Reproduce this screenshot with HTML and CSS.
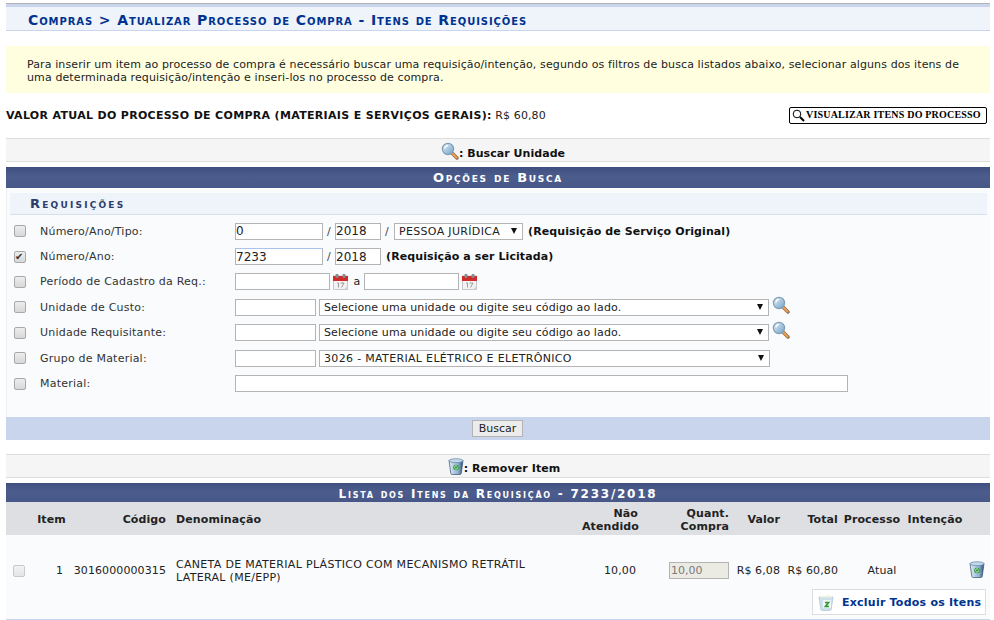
FILE: index.html
```html
<!DOCTYPE html>
<html lang="pt-BR">
<head>
<meta charset="utf-8">
<title>Compras</title>
<link rel="stylesheet" href="styles.css">
</head>
<body>
<svg class="sprites" width="0" height="0" aria-hidden="true">
  <defs>
    <linearGradient id="lens" x1="0" y1="0" x2="1" y2="1"><stop offset="0" stop-color="#e4f1fb"/><stop offset="1" stop-color="#6f9fc6"/></linearGradient>
    <linearGradient id="bin" x1="0" y1="0" x2="1" y2="0"><stop offset="0" stop-color="#e2edf6"/><stop offset=".65" stop-color="#8fb0d0"/><stop offset="1" stop-color="#2f4f70"/></linearGradient>
    <symbol id="i-search" viewBox="0 0 18 18">
      <path d="M10.500 10.500 16 16" stroke="#8a6a4a" stroke-width="3.400" stroke-linecap="round"/>
      <path d="M11 11l4.600 4.600" stroke="#f0a050" stroke-width="2" stroke-linecap="round"/>
      <circle cx="7" cy="7" r="5.600" fill="url(#lens)" stroke="#7f9fb8" stroke-width="1.200"/>
      <path d="M4 6.500A3 3 0 0 1 7 3.600" fill="none" stroke="#fff" stroke-width="1.200"/>
    </symbol>
    <symbol id="i-cal" viewBox="0 0 15 16">
      <rect x=".5" y="2" width="14" height="13.500" fill="#f2f2f2" stroke="#c8c8c8"/>
      <rect x="0" y="2" width="15" height="5" fill="#cf2b2b"/>
      <rect x="2.500" y="0" width="3" height="4" rx="1" fill="#8a8a8a"/>
      <rect x="9.500" y="0" width="3" height="4" rx="1" fill="#8a8a8a"/>
      <path d="M4 9h1.500v4.500M7.500 9H11L8.500 13.500" fill="none" stroke="#9a9a9a"/>
      <path d="M11 15.500l3.500-3.500v3.500z" fill="#d0d0d0"/>
    </symbol>
    <symbol id="i-bin" viewBox="0 0 16 17">
      <path d="M1 2.500h14l-1.800 13a1.500 1.500 0 0 1-1.500 1H4.300a1.500 1.500 0 0 1-1.500-1z" fill="url(#bin)" stroke="#2f4f70" stroke-width=".7"/>
      <ellipse cx="8" cy="2.700" rx="7" ry="2" fill="#c4d8e8" stroke="#5f84a5" stroke-width=".7"/>
      <circle cx="8" cy="9.500" r="2.800" fill="#2f9a3a"/>
      <path d="M6.400 9.500a1.600 1.600 0 0 1 2.900-.9M9.600 9.500a1.600 1.600 0 0 1-2.900.9" fill="none" stroke="#e4f7e4" stroke-width=".9"/>
    </symbol>
    <symbol id="i-binall" viewBox="0 0 16 17">
      <path d="M1 3h14l-1.800 12.500a1.500 1.500 0 0 1-1.500 1H4.300a1.500 1.500 0 0 1-1.500-1z" fill="#cfe0ea" stroke="#a9c3d2" stroke-width=".7"/>
      <path d="M2 3.500l2-2.500 3 1.500 3-2 3 1 1 2z" fill="#f3f6e6"/>
      <rect x="5" y="6" width="8" height="8" rx="1" fill="#fff" opacity=".7"/>
      <path d="M7 8.500h3.500L7.500 12.500H11" fill="none" stroke="#2f9a2f" stroke-width="1.700"/>
    </symbol>
  </defs>
</svg>

<div class="page">
  <h2 class="title">Compras &gt; Atualizar Processo de Compra - Itens de Requisições</h2>

  <div class="notice">Para inserir um item ao processo de compra é necessário buscar uma requisição/intenção, segundo os filtros de busca listados abaixo, selecionar alguns dos itens de uma determinada requisição/intenção e inseri-los no processo de compra.</div>

  <div class="value-row">
    <p class="value-text"><b>VALOR ATUAL DO PROCESSO DE COMPRA (MATERIAIS E SERVIÇOS GERAIS):</b> R$ 60,80</p>
    <button class="view-btn" type="button">
      <svg class="view-icon" viewBox="0 0 13 13"><circle cx="5" cy="5" r="3.800" fill="#fff" stroke="#000"/><path d="M8 8l4 4" stroke="#000" stroke-width="2"/></svg>
      <span>VISUALIZAR ITENS DO PROCESSO</span>
    </button>
  </div>

  <div class="legend legend-search"><svg class="ic18"><use href="#i-search"/></svg><b>: Buscar Unidade</b></div>

  <section class="panel">
    <h3 class="panel-head">Opções de Busca</h3>
    <div class="panel-body">
      <h4 class="sub-head">Requisições</h4>
      <div class="form-grid">
        <div class="row">
          <input class="chk" type="checkbox">
          <label class="lbl">Número/Ano/Tipo:</label>
          <div class="fields">
            <input class="in w88" value="0"><span class="sep">/</span><input class="in w46" value="2018"><span class="sep">/</span>
            <span class="sel w129 upper"><select><option>PESSOA JURÍDICA</option></select></span>
            <b class="hint">(Requisição de Serviço Original)</b>
          </div>
        </div>
        <div class="row">
          <input class="chk" type="checkbox" checked>
          <label class="lbl">Número/Ano:</label>
          <div class="fields">
            <input class="in w88 focus" value="7233"><span class="sep">/</span><input class="in w46" value="2018">
            <b class="hint">(Requisição a ser Licitada)</b>
          </div>
        </div>
        <div class="row">
          <input class="chk" type="checkbox">
          <label class="lbl">Período de Cadastro da Req.:</label>
          <div class="fields">
            <input class="in w95"><svg class="ic-cal"><use href="#i-cal"/></svg><span class="a-sep">a</span><input class="in w95"><svg class="ic-cal"><use href="#i-cal"/></svg>
          </div>
        </div>
        <div class="row">
          <input class="chk" type="checkbox">
          <label class="lbl">Unidade de Custo:</label>
          <div class="fields">
            <input class="in w81"><span class="sel w450"><select><option>Selecione uma unidade ou digite seu código ao lado.</option></select></span><svg class="ic18 ic-lookup"><use href="#i-search"/></svg>
          </div>
        </div>
        <div class="row">
          <input class="chk" type="checkbox">
          <label class="lbl">Unidade Requisitante:</label>
          <div class="fields">
            <input class="in w81"><span class="sel w450"><select><option>Selecione uma unidade ou digite seu código ao lado.</option></select></span><svg class="ic18 ic-lookup"><use href="#i-search"/></svg>
          </div>
        </div>
        <div class="row">
          <input class="chk" type="checkbox">
          <label class="lbl">Grupo de Material:</label>
          <div class="fields">
            <input class="in w81"><span class="sel w451 upper"><select><option>3026 - MATERIAL ELÉTRICO E ELETRÔNICO</option></select></span>
          </div>
        </div>
        <div class="row">
          <input class="chk" type="checkbox">
          <label class="lbl">Material:</label>
          <div class="fields"><input class="in w613"></div>
        </div>
      </div>
    </div>
    <div class="panel-foot"><button class="search-btn" type="button">Buscar</button></div>
  </section>

  <div class="legend legend-remove"><svg class="ic16"><use href="#i-bin"/></svg><b>: Remover Item</b></div>

  <section class="list">
    <h3 class="list-head">Lista dos Itens da Requisição - 7233/2018</h3>
    <table class="items">
      <colgroup>
        <col class="c-chk"><col class="c-item"><col class="c-code"><col class="c-name"><col class="c-na"><col class="c-qty"><col class="c-val"><col class="c-tot"><col class="c-proc"><col class="c-int"><col class="c-del">
      </colgroup>
      <thead>
        <tr>
          <th></th>
          <th class="ctr">Item</th>
          <th class="rt">Código</th>
          <th class="lf">Denominação</th>
          <th class="rt">Não<br>Atendido</th>
          <th class="rt">Quant.<br>Compra</th>
          <th class="rt">Valor</th>
          <th class="rt">Total</th>
          <th class="ctr">Processo</th>
          <th class="ctr">Intenção</th>
          <th></th>
        </tr>
      </thead>
      <tbody>
        <tr>
          <td class="ctr"><input class="chk chk-off" type="checkbox" disabled></td>
          <td class="num-item">1</td>
          <td class="rt">3016000000315</td>
          <td class="name">CANETA DE MATERIAL PLÁSTICO COM MECANISMO RETRÁTIL LATERAL (ME/EPP)</td>
          <td class="num-na">10,00</td>
          <td class="rt"><input class="in qty" value="10,00" disabled></td>
          <td class="rt">R$ 6,08</td>
          <td class="rt">R$ 60,80</td>
          <td class="proc">Atual</td>
          <td></td>
          <td class="del"><svg class="ic16"><use href="#i-bin"/></svg></td>
        </tr>
      </tbody>
    </table>
    <div class="list-foot">
      <a class="del-all" href="#"><svg class="ic16"><use href="#i-binall"/></svg><span>Excluir Todos os Itens</span></a>
    </div>
  </section>
</div>
</body>
</html>
```

FILE: styles.css
```css
* { box-sizing: border-box; }
html, body { margin: 0; padding: 0; background: #fff; }
body {
  font-family: Verdana, "DejaVu Sans", sans-serif;
  font-size: 11px;
  line-height: 13px;
  letter-spacing: .1px;
  color: #222;
  overflow: hidden;
}
.sprites { position: absolute; }
.page { padding: 3px 4px 0 6px; height: 620px; overflow: hidden; }

.title {
  margin: 0;
  height: 28px;
  padding: 7px 0 0 22px;
  border-top: 1px solid #b4b4b4;
  background: linear-gradient(#c8d5ec 0, #c8d5ec 3px, #eff3fa 3px);
  border-bottom: 1px solid #c8d5ec;
  color: #003390;
  font-size: 14px;
  line-height: 19px;
  font-weight: bold;
  font-variant: small-caps;
  letter-spacing: .9px;
  white-space: nowrap;
}

.notice {
  margin-top: 15px;
  height: 47px;
  padding: 12px 20px 0 21px;
  background: #ffffe0;
  color: #222;
  letter-spacing: .113px;
}

.value-row {
  display: flex;
  justify-content: space-between;
  align-items: center;
  height: 45px;
  padding-right: 3px;
}
.value-text { margin: 0; color: #222; }
.value-text b { color: #111; letter-spacing: .32px; }
.view-btn {
  display: flex;
  align-items: center;
  width: 198px;
  height: 17px;
  padding: 0 0 3px 2px;
  border: 1px solid #000;
  border-radius: 2px;
  background: #fff;
  font-family: "Liberation Serif", serif;
  font-weight: bold;
  font-size: 10px;
  letter-spacing: .2px;
  color: #000;
  white-space: nowrap;
}
.view-icon { width: 13px; height: 13px; margin: 2px 1px 0 0; flex: none; }

.legend {
  display: flex;
  align-items: center;
  justify-content: center;
  height: 24px;
  background: #f5f5f5;
  border-top: 1px solid #ddd;
  border-bottom: 1px solid #ddd;
  color: #222;
}
.legend b { color: #111; letter-spacing: .1px; }
.legend-search { padding-top: 6px; padding-left: 10px; }
.legend-search .ic18 { margin-top: -4px; }
.legend-search b { letter-spacing: .05px; }
.legend-remove { margin-top: 14px; padding-top: 4px; padding-left: 12px; }
.legend-remove .ic16 { margin-top: -3px; }
.ic18 { width: 18px; height: 18px; flex: none; }
.ic16 { width: 16px; height: 17px; flex: none; }

.panel { margin-top: 5px; }
.panel-head, .list-head {
  margin: 0;
  color: #fff;
  text-align: center;
  font-weight: bold;
  font-variant: small-caps;
  white-space: nowrap;
  background: linear-gradient(#3e4f80, #4b5c8d 45%, #465788);
}
.panel-head {
  height: 21px;
  font-size: 13px;
  line-height: 21px;
  letter-spacing: 1.700px;
}
.panel-body {
  height: 229px;
  padding: 5px 3px 0;
  background: #f9fbfd;
  border-left: 1px solid #eef0f4;
}
.sub-head {
  margin: 0;
  height: 22px;
  padding: 0 0 0 20px;
  background: #eff3fa;
  border-bottom: 1px solid #d6dff0;
  color: #2d3d6b;
  font-size: 13px;
  line-height: 21px;
  font-weight: bold;
  font-variant: small-caps;
  letter-spacing: 2.200px;
}
.form-grid { padding-top: 3.500px; }
.row {
  display: grid;
  grid-template-columns: 26px 195px 1fr;
  align-items: center;
  height: 25.400px;
  padding-left: 4px;
}
.lbl { color: #333; letter-spacing: .22px; }
.fields { display: flex; align-items: center; }

.chk {
  appearance: none;
  -webkit-appearance: none;
  position: relative;
  width: 12px;
  height: 12px;
  margin: 0;
  border: 1px solid #a9a9a9;
  border-radius: 2px;
  background: linear-gradient(#ededed, #d8d8d8);
}
.chk:checked::after {
  content: "✔";
  position: absolute;
  left: 0;
  top: -2px;
  font-size: 10px;
  line-height: 13px;
  color: #333;
}
.chk-off { opacity: .6; display: block; }

.in {
  height: 17px;
  padding: 0;
  margin: 0;
  border: 1px solid #b4b4b4;
  background: #fff;
  font-family: inherit;
  font-size: 12px;
  color: #222;
  border-radius: 0;
  outline: none;
}
.focus { border-top-color: #a9c3ea; }
.w46 { width: 46px; }
.w81 { width: 81px; }
.w88 { width: 88px; }
.w95 { width: 95px; }
.w613 { width: 613px; }
.sep { width: 12px; text-align: center; color: #444; }
.a-sep { width: 16px; padding-left: 2px; text-align: center; }
.ic-cal { width: 15px; height: 16px; margin-left: 3px; flex: none; }

.sel { position: relative; display: block; height: 17px; margin-left: 3px; }
.sep + .sel { margin-left: 1px; }
.sel select {
  appearance: none;
  -webkit-appearance: none;
  width: 100%;
  height: 100%;
  margin: 0;
  padding: 0 12px 0 4px;
  border: 1px solid #b4b4b4;
  border-radius: 0;
  background: #fff;
  font-family: inherit;
  font-size: 11px;
  letter-spacing: .12px;
  color: #222;
}
.upper select { letter-spacing: .33px; }
.sel::after {
  content: "";
  position: absolute;
  right: 6px;
  top: 5px;
  border-left: 3.500px solid transparent;
  border-right: 3.500px solid transparent;
  border-top: 6px solid #111;
  pointer-events: none;
}
.w129 { width: 129px; }
.w450 { width: 450px; }
.w451 { width: 451px; }
.hint { margin-left: 5px; color: #111; white-space: nowrap; }
.ic-lookup { margin: -5px 0 0 3px; }

.panel-foot {
  display: flex;
  justify-content: center;
  align-items: center;
  height: 23px;
  padding-right: 1px;
  background: #c8d5ec;
}
.search-btn {
  width: 51px;
  height: 17px;
  padding: 0;
  border: 1px solid #b4b4b4;
  border-radius: 0;
  background: #ececec;
  font-family: inherit;
  font-size: 11px;
  color: #222;
}

.list { margin-top: 5px; background: #f9fbfd; border-bottom: 3px solid #c8d5ec; }
.list-head {
  height: 19px;
  padding-top: 1px;
  font-size: 12px;
  line-height: 20px;
  letter-spacing: 1.750px;
}
.items { width: 100%; table-layout: fixed; border-collapse: collapse; }
.c-chk { width: 28px; }
.c-item { width: 35px; }
.c-code { width: 99px; }
.c-name { width: 412px; }
.c-na { width: 60px; }
.c-qty { width: 91px; }
.c-val { width: 51px; }
.c-tot { width: 58px; }
.c-proc { width: 64px; }
.c-int { width: 62px; }
.c-del { width: 24px; }
.items th {
  height: 33px;
  padding: 2px 2px 0;
  background: #dedfe3;
  color: #222;
  font-weight: bold;
  line-height: 13px;
  vertical-align: middle;
}
.items td {
  height: 54px;
  padding: 17px 2px 0;
  vertical-align: middle;
  color: #222;
}
.items .lf { text-align: left; padding-left: 8px; }
.items .rt { text-align: right; }
.items .ctr { text-align: center; }
.items .ctr .chk { margin-left: 5px; }
.items td.num-item { text-align: right; padding-right: 6px; }
.items td.num-na { text-align: right; padding-right: 4px; }
.items td.name { line-height: 13px; letter-spacing: .31px; padding-left: 8px; padding-right: 20px; }
.items td.proc { text-align: center; padding-left: 22px; }
.items td.del { padding-left: 3px; padding-right: 4px; }
.qty {
  width: 60px;
  height: 17px;
  padding: 0 1px;
  background: #ebebe4;
  color: #7a7a7a;
  font-size: 11px;
}
.list-foot { display: flex; justify-content: flex-end; height: 30px; padding-right: 4px; }
.del-all {
  display: flex;
  align-items: center;
  width: 174px;
  height: 26px;
  padding-left: 5px;
  background: #fff;
  border: 1px solid #ddd;
  color: #003390;
  font-weight: bold;
  letter-spacing: .23px;
  text-decoration: none;
  white-space: nowrap;
}
.del-all span { margin-left: 8px; }
```
